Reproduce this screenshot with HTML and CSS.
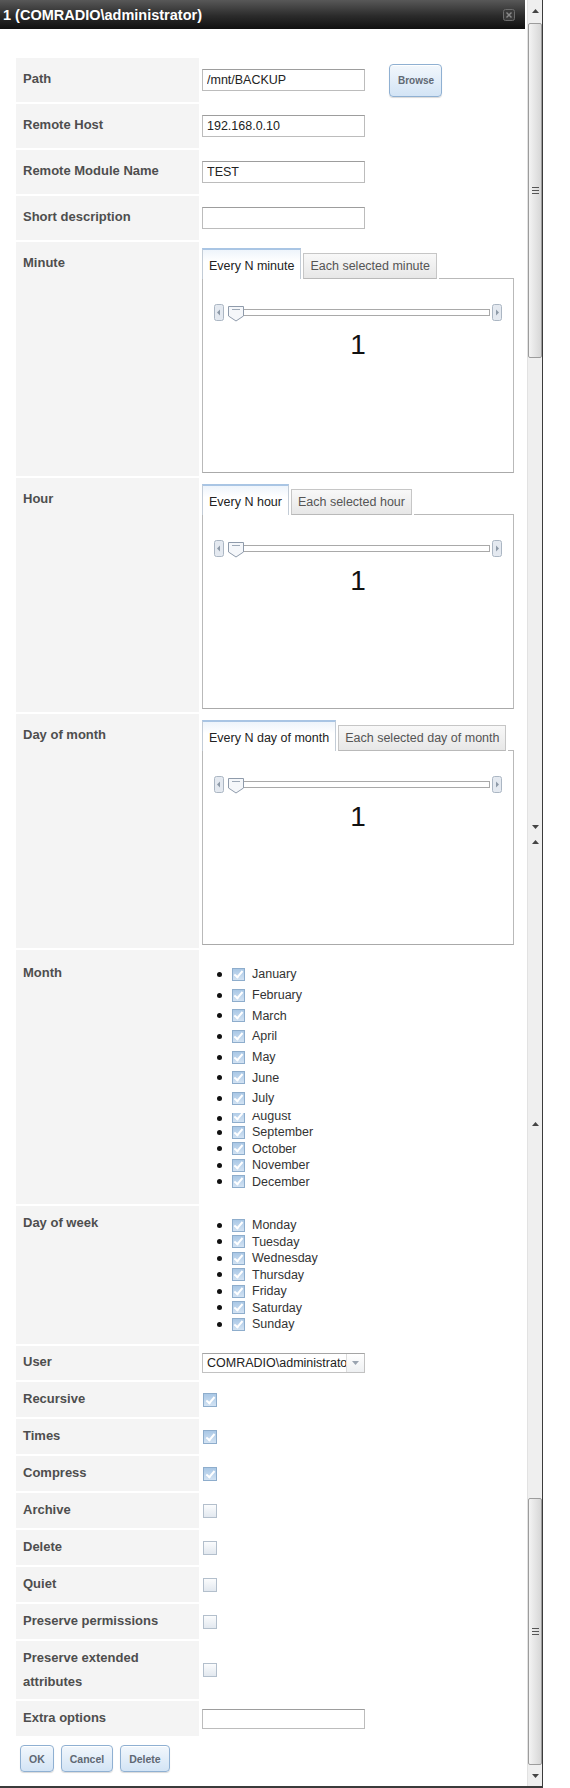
FILE: index.html
```html
<!DOCTYPE html>
<html lang="en">
<head>
  <meta charset="UTF-8">
  <title>1 (COMRADIO\administrator)</title>
  <link rel="stylesheet" href="styles.css">
</head>
<body>
<div class="window">
  <div class="dialog">
    <div class="titlebar">
      <span class="title">1 (COMRADIO\administrator)</span>
      <svg class="close" width="12" height="12" viewBox="0 0 12 12">
        <rect x="0.5" y="0.5" width="11" height="11" rx="2" fill="#3a3a3a" stroke="#6d6d6d"/>
        <path d="M3.5 3.5l5 5M8.5 3.5l-5 5" stroke="#8a8a8a" stroke-width="1.4"/>
      </svg>
    </div>

    <div class="form">
      <div class="label">Path</div>
      <div class="field line">
        <input class="textbox" type="text" value="/mnt/BACKUP">
        <button class="btn browse">Browse</button>
      </div>

      <div class="label">Remote Host</div>
      <div class="field line"><input class="textbox" type="text" value="192.168.0.10"></div>

      <div class="label">Remote Module Name</div>
      <div class="field line"><input class="textbox" type="text" value="TEST"></div>

      <div class="label">Short description</div>
      <div class="field line"><input class="textbox" type="text" value=""></div>

      <!-- minute -->
      <div class="label">Minute</div>
      <div class="field tabbed">
        <div class="tabstrip">
          <div class="tab active">Every N minute</div>
          <div class="tab">Each selected minute</div>
          <div class="tab-fill"></div>
        </div>
        <div class="tabpanel">
          <svg class="slider" width="288" height="18" viewBox="0 0 288 18">
            <rect x="0.5" y="0.5" width="9" height="16" rx="2" fill="#e4e9f0" stroke="#abb6c3"/>
            <path d="M6 5.5v6l-3-3z" fill="#8e9aa8"/>
            <rect x="14.5" y="5.5" width="261" height="6" fill="#fff" stroke="#a9a9a9"/>
            <path d="M14.5 2.5h15v9.5l-7.5 5l-7.5-5z" fill="#f5f7fa" stroke="#8f9bab"/>
            <path d="M18 5.5h8" stroke="#9ea9b7"/>
            <rect x="278.5" y="0.5" width="9" height="16" rx="2" fill="#e4e9f0" stroke="#abb6c3"/>
            <path d="M282 5.5v6l3-3z" fill="#8e9aa8"/>
          </svg>
          <div class="value">1</div>
        </div>
      </div>

      <!-- hour -->
      <div class="label">Hour</div>
      <div class="field tabbed">
        <div class="tabstrip">
          <div class="tab active">Every N hour</div>
          <div class="tab">Each selected hour</div>
          <div class="tab-fill"></div>
        </div>
        <div class="tabpanel">
          <svg class="slider" width="288" height="18" viewBox="0 0 288 18">
            <rect x="0.5" y="0.5" width="9" height="16" rx="2" fill="#e4e9f0" stroke="#abb6c3"/>
            <path d="M6 5.5v6l-3-3z" fill="#8e9aa8"/>
            <rect x="14.5" y="5.5" width="261" height="6" fill="#fff" stroke="#a9a9a9"/>
            <path d="M14.5 2.5h15v9.5l-7.5 5l-7.5-5z" fill="#f5f7fa" stroke="#8f9bab"/>
            <path d="M18 5.5h8" stroke="#9ea9b7"/>
            <rect x="278.5" y="0.5" width="9" height="16" rx="2" fill="#e4e9f0" stroke="#abb6c3"/>
            <path d="M282 5.5v6l3-3z" fill="#8e9aa8"/>
          </svg>
          <div class="value">1</div>
        </div>
      </div>

      <!-- day of month -->
      <div class="label">Day of month</div>
      <div class="field tabbed">
        <div class="tabstrip">
          <div class="tab active">Every N day of month</div>
          <div class="tab">Each selected day of month</div>
          <div class="tab-fill"></div>
        </div>
        <div class="tabpanel">
          <svg class="slider" width="288" height="18" viewBox="0 0 288 18">
            <rect x="0.5" y="0.5" width="9" height="16" rx="2" fill="#e4e9f0" stroke="#abb6c3"/>
            <path d="M6 5.5v6l-3-3z" fill="#8e9aa8"/>
            <rect x="14.5" y="5.5" width="261" height="6" fill="#fff" stroke="#a9a9a9"/>
            <path d="M14.5 2.5h15v9.5l-7.5 5l-7.5-5z" fill="#f5f7fa" stroke="#8f9bab"/>
            <path d="M18 5.5h8" stroke="#9ea9b7"/>
            <rect x="278.5" y="0.5" width="9" height="16" rx="2" fill="#e4e9f0" stroke="#abb6c3"/>
            <path d="M282 5.5v6l3-3z" fill="#8e9aa8"/>
          </svg>
          <div class="value">1</div>
        </div>
      </div>

      <!-- month -->
      <div class="label month-label">Month</div>
      <div class="field">
        <ul class="checklist months">
          <li class="big"><span class="cb on"></span>January</li>
          <li class="big"><span class="cb on"></span>February</li>
          <li class="big"><span class="cb on"></span>March</li>
          <li class="big"><span class="cb on"></span>April</li>
          <li class="big"><span class="cb on"></span>May</li>
          <li class="big"><span class="cb on"></span>June</li>
          <li class="big"><span class="cb on"></span>July</li>
          <li class="cut"><div class="cut-inner"><span class="cb on"></span>August</div></li>
          <li><span class="cb on"></span>September</li>
          <li><span class="cb on"></span>October</li>
          <li><span class="cb on"></span>November</li>
          <li><span class="cb on"></span>December</li>
        </ul>
      </div>

      <!-- day of week -->
      <div class="label small">Day of week</div>
      <div class="field">
        <ul class="checklist days">
          <li><span class="cb on"></span>Monday</li>
          <li><span class="cb on"></span>Tuesday</li>
          <li><span class="cb on"></span>Wednesday</li>
          <li><span class="cb on"></span>Thursday</li>
          <li><span class="cb on"></span>Friday</li>
          <li><span class="cb on"></span>Saturday</li>
          <li><span class="cb on"></span>Sunday</li>
        </ul>
      </div>

      <div class="label user-label">User</div>
      <div class="field user">
        <div class="select">
          <span class="select-text">COMRADIO\administrator</span>
          <span class="select-arrow">
            <svg width="7" height="4" viewBox="0 0 7 4"><path d="M0 0h7l-3.5 4z" fill="#9aa4b0"/></svg>
          </span>
        </div>
      </div>

      <div class="label small">Recursive</div>
      <div class="field check"><span class="cb big on"></span></div>

      <div class="label small">Times</div>
      <div class="field check"><span class="cb big on"></span></div>

      <div class="label small">Compress</div>
      <div class="field check"><span class="cb big on"></span></div>

      <div class="label small">Archive</div>
      <div class="field check"><span class="cb big"></span></div>

      <div class="label small">Delete</div>
      <div class="field check"><span class="cb big"></span></div>

      <div class="label small">Quiet</div>
      <div class="field check"><span class="cb big"></span></div>

      <div class="label small">Preserve permissions</div>
      <div class="field check"><span class="cb big"></span></div>

      <div class="label small">Preserve extended attributes</div>
      <div class="field check"><span class="cb big"></span></div>

      <div class="label small">Extra options</div>
      <div class="field check"><input class="textbox thin" type="text" value=""></div>
    </div>

    <div class="actions">
      <button class="btn">OK</button>
      <button class="btn">Cancel</button>
      <button class="btn">Delete</button>
    </div>
  </div>

  <!-- scrollbar (two captures stacked) -->
  <div class="scrollbar">
    <div class="sb-btn up-1"><svg width="7" height="4" viewBox="0 0 7 4"><path d="M0 4h7l-3.5-4z" fill="#444"/></svg></div>
    <div class="sb-thumb thumb-1"><svg width="7" height="7" viewBox="0 0 7 7"><path d="M0 .5h7M0 3.5h7M0 6.5h7" stroke="#555"/></svg></div>
    <div class="sb-track track-1"></div>
    <div class="sb-btn down-1"><svg width="7" height="4" viewBox="0 0 7 4"><path d="M0 0h7l-3.5 4z" fill="#444"/></svg></div>
    <div class="sb-btn up-2"><svg width="7" height="4" viewBox="0 0 7 4"><path d="M0 4h7l-3.5-4z" fill="#444"/></svg></div>
    <div class="sb-track track-2"></div>
    <div class="sb-btn up-3"><svg width="7" height="4" viewBox="0 0 7 4"><path d="M0 4h7l-3.5-4z" fill="#444"/></svg></div>
    <div class="sb-track track-3"></div>
    <div class="sb-thumb thumb-2"><svg width="7" height="7" viewBox="0 0 7 7"><path d="M0 .5h7M0 3.5h7M0 6.5h7" stroke="#555"/></svg></div>
    <div class="sb-btn down-2"><svg width="7" height="4" viewBox="0 0 7 4"><path d="M0 0h7l-3.5 4z" fill="#444"/></svg></div>
  </div>
</div>
</body>
</html>
```

FILE: styles.css
```css
body {
  margin: 0;
  background: #fff;
  font-family: "Liberation Sans", Arial, sans-serif;
}
.window {
  display: flex;
  width: 542px;
  height: 1786px;
  border-right: 1px solid #3b3b3b;
  border-bottom: 2px solid #3b3b3b;
}
.dialog {
  width: 527px;
}
.titlebar {
  display: flex;
  align-items: center;
  justify-content: space-between;
  width: 525px;
  height: 29px;
  padding-left: 3px;
  box-sizing: border-box;
  background: linear-gradient(#585858, #2b2b2b 55%, #101010);
}
.title {
  color: #fff;
  font-weight: bold;
  font-size: 14.5px;
}
.close {
  margin-right: 10px;
}

/* form grid */
.form {
  display: grid;
  grid-template-columns: 183px 320px;
  column-gap: 3px;
  row-gap: 2px;
  margin: 29px 0 0 16px;
}
.label {
  background: #f4f4f4;
  color: #4e4e4e;
  font-weight: bold;
  font-size: 13px;
  line-height: 24px;
  padding: 9px 6px 0 7px;
}
.label.small {
  padding-top: 5px;
  padding-bottom: 5px;
}
.month-label {
  padding-top: 11px;
}
.user-label {
  padding-top: 4px;
}
.field {
  font-size: 12.5px;
  color: #333;
}
.field.line {
  display: flex;
  align-items: center;
  min-height: 44px;
}
.field.check {
  display: flex;
  align-items: center;
  min-height: 35px;
}
.field.user {
  display: flex;
  align-items: center;
  min-height: 34px;
}
.textbox {
  width: 163px;
  height: 22px;
  box-sizing: border-box;
  margin: 0;
  padding: 0 4px;
  border: 1px solid #bcbcbc;
  border-top-color: #9d9d9d;
  font-family: "Liberation Sans", Arial, sans-serif;
  font-size: 12.5px;
  color: #222;
}
.textbox.thin {
  height: 20px;
}
.btn {
  height: 27px;
  padding: 0 8px;
  border: 1px solid #8fb0d2;
  border-radius: 4px;
  background: linear-gradient(#f2f7fc, #d3e4f5);
  box-shadow: inset 0 1px 0 #fff, 0 1px 1px rgba(0, 0, 0, 0.15);
  font-family: "Liberation Sans", Arial, sans-serif;
  font-weight: bold;
  font-size: 10.5px;
  color: #5f6873;
}
.btn.browse {
  width: 53px;
  height: 33px;
  margin-left: 24px;
  font-size: 10px;
}

/* tabs */
.field.tabbed {
  padding: 6px 0 3px;
  width: 312px;
}
.tabstrip {
  display: flex;
  align-items: flex-end;
  height: 31px;
}
.tab {
  height: 26px;
  line-height: 15px;
  padding: 5px 6px 0;
  box-sizing: border-box;
  margin-right: 2px;
  border: 1px solid #c6c6c6;
  border-bottom-color: #b9b9b9;
  background: linear-gradient(#f8f8f8, #e7e7e7);
  color: #555;
  white-space: nowrap;
}
.tab.active {
  height: 31px;
  padding-top: 9px;
  border-color: #c3ccd6;
  border-top: 2px solid #a9c5e4;
  border-bottom: none;
  background: linear-gradient(#eef4fb, #fff 40%);
  color: #222;
}
.tab-fill {
  flex: 1;
  border-bottom: 1px solid #b9b9b9;
}
.tabpanel {
  height: 194px;
  box-sizing: border-box;
  padding: 25px 0 0 11px;
  border: 1px solid #b9b9b9;
  border-top: none;
  border-bottom-color: #aaa;
}
.slider {
  display: block;
}
.value {
  margin: 9px 11px 0 0;
  text-align: center;
  font-size: 28px;
  line-height: 28px;
  color: #111;
}

/* checkbox lists */
.checklist {
  list-style: none;
  margin: 0;
  padding: 0;
}
.checklist li {
  display: flex;
  align-items: center;
  height: 16.5px;
}
.checklist li::before {
  content: "";
  width: 5px;
  height: 5px;
  border-radius: 50%;
  background: #111;
  margin: 0 10px 0 15px;
}
.checklist .cb {
  margin-right: 7px;
}
.months {
  padding: 14px 0 14px;
}
.months li.big {
  height: 20.7px;
}
.months li.cut {
  height: 11px;
  margin-top: 4px;
  overflow: hidden;
  align-items: flex-start;
}
.months li.cut::before {
  margin-top: 3px;
}
.cut-inner {
  display: flex;
  align-items: center;
  height: 16.5px;
  margin-top: -5px;
}
.days {
  padding: 11px 0 12px;
}

/* checkbox */
.cb {
  display: inline-block;
  position: relative;
  width: 13px;
  height: 13px;
  box-sizing: border-box;
  border: 1px solid #b3bfcc;
  background: linear-gradient(#fbfcfd, #e2e8ef);
  flex-shrink: 0;
}
.cb.big {
  width: 14px;
  height: 14px;
  margin-left: 1px;
}
.cb.on {
  border-color: #8eadcc;
  background: linear-gradient(#a9c7e5, #d3e3f3);
}
.cb.on::after {
  content: "";
  position: absolute;
  left: 3px;
  top: 0;
  width: 3px;
  height: 7px;
  border: solid #fff;
  border-width: 0 2px 2px 0;
  transform: rotate(40deg);
}
.cb.big.on::after {
  left: 4px;
  top: 1px;
}

/* user select */
.select {
  display: flex;
  width: 163px;
  height: 20px;
  box-sizing: border-box;
  border: 1px solid #c2c2c2;
  border-top-color: #a5a5a5;
}
.select-text {
  flex: 1;
  overflow: hidden;
  white-space: nowrap;
  padding-left: 4px;
  line-height: 18px;
  color: #222;
}
.select-arrow {
  display: flex;
  align-items: center;
  justify-content: center;
  width: 17px;
  border-left: 1px solid #dcdcdc;
  background: linear-gradient(#fff, #eef0f2);
}

.actions {
  display: flex;
  gap: 7px;
  margin: 9px 0 0 20px;
}

/* scrollbar */
.scrollbar {
  display: flex;
  flex-direction: column;
  width: 15px;
  background: #efefef;
  border-left: 1px solid #e2e2e2;
  box-sizing: border-box;
}
.sb-btn {
  display: flex;
  align-items: center;
  justify-content: center;
}
.sb-thumb {
  display: flex;
  align-items: center;
  justify-content: center;
  border: 1px solid #9c9c9c;
  border-radius: 2px;
  background: linear-gradient(to right, #f3f3f3, #d7d7d7);
  box-sizing: border-box;
}
.up-1 { height: 22px; }
.thumb-1 { height: 335px; margin-top: 1px; }
.track-1 { height: 460px; }
.down-1 { height: 17px; }
.up-2 { height: 14px; }
.track-2 { height: 268px; }
.up-3 { height: 14px; }
.track-3 { height: 367px; }
.thumb-2 { height: 267px; }
.down-2 { height: 21px; }
```
